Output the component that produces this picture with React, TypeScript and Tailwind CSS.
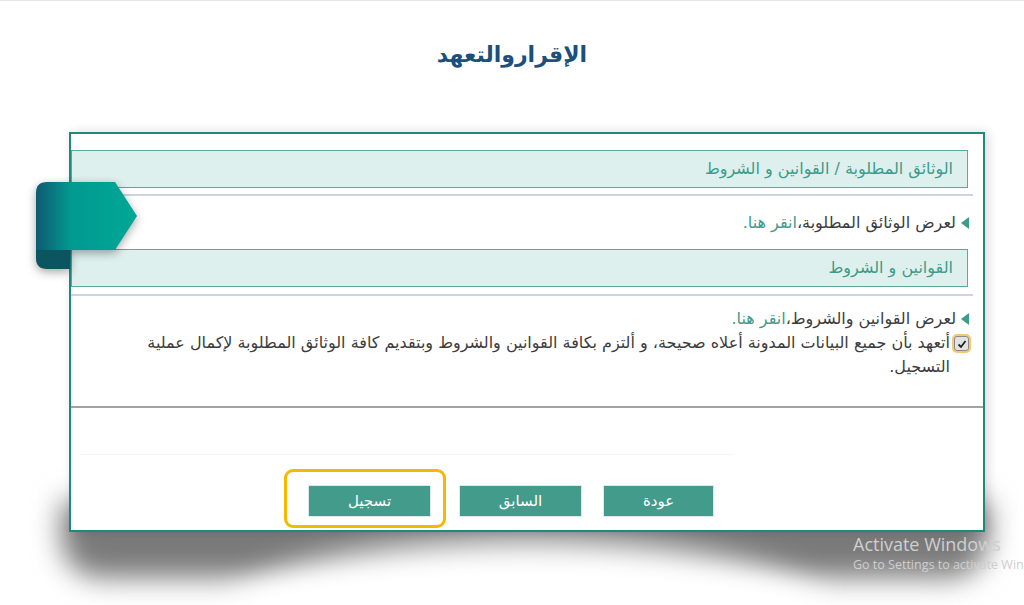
import React from "react";

const font = { fontFamily: '"DejaVu Sans", "Noto Sans", sans-serif' };

const Ribbon: React.FC = () => (
  <svg
    className="absolute left-[36px] top-[180px] drop-shadow-[0_3px_5px_rgba(0,0,0,0.35)]"
    width="104"
    height="90"
    viewBox="0 0 104 90"
  >
    <defs>
      <linearGradient id="rib" x1="0" y1="0" x2="1" y2="0">
        <stop offset="0" stopColor="#0f5a72" />
        <stop offset="0.35" stopColor="#019a90" />
        <stop offset="1" stopColor="#00a797" />
      </linearGradient>
    </defs>
    <path d="M0,69 H34 V88 H11 Q0,88 0,77 Z" fill="#0b5560" />
    <path d="M11,1 H79 L101,35 L79,69 H0 V12 Q0,1 11,1 Z" fill="url(#rib)" />
  </svg>
);

const Arrow: React.FC = () => (
  <span className="inline-block w-0 h-0 border-y-[6px] border-y-transparent border-r-[8px] border-r-[#3d9b8a] ml-[5px]" />
);

const SectionHeader: React.FC<{ title: string }> = ({ title }) => (
  <div className="mr-[15px] h-[38px] flex items-center bg-[#ddf0ee] border-[1.5px] border-[#5aa99b] pr-[14px] text-[16px] text-[#3d9b8a]">
    {title}
  </div>
);

const Button: React.FC<{ label: string; w: string; highlight?: boolean }> = ({
  label,
  w,
  highlight,
}) => (
  <button
    className={`relative h-[32px] ${w} bg-[#439b8c] text-white text-[15px] border border-[#d9ebe8]`}
  >
    {highlight && (
      <span className="absolute -left-[25px] -right-[16px] -top-[17px] -bottom-[12px] border-[3px] border-[#f6b800] rounded-[9px]" />
    )}
    {label}
  </button>
);

export default function App() {
  return (
    <div
      className="relative w-full h-[605px] bg-white border-t border-[#e6e6e6] overflow-hidden"
      style={font}
    >
      <h1
        dir="rtl"
        className="pt-[38px] h-[131px] text-center text-[22px] leading-[32px] font-bold text-[#1b4f7c]"
      >
        الإقراروالتعهد
      </h1>

      <div className="relative ml-[69px] w-[916px]">
        {/* curved lifted shadow */}
        <div className="absolute -left-[8px] -right-[4px] top-[370px] h-[76px] bg-[#7a7a7a] blur-[14px] rounded-b-[40px]" />
        <div className="absolute left-[160px] right-[160px] top-[408px] h-[150px] bg-white blur-[16px] rounded-[50%]" />

        <div
          dir="rtl"
          className="relative h-[400px] bg-white border-2 border-[#1f8a7c] pt-[16px] shadow-[3px_0_10px_rgba(0,0,0,0.15)]"
        >
          <SectionHeader title="الوثائق المطلوبة / القوانين و الشروط" />
          <div className="mr-[10px] mt-[6px] border-t-2 border-[#cdd5e3]" />
          <div className="h-[53px] flex items-center pr-[14px] text-[16px] text-[#3c3c3c]">
            <Arrow />
            <span>
              لعرض الوثائق المطلوبة،
              <span className="text-[#3d9b8a]">انقر هنا.</span>
            </span>
          </div>
          <SectionHeader title="القوانين و الشروط" />
          <div className="mr-[10px] mt-[7px] border-t-2 border-[#cdd5e3]" />
          <div className="h-[110px] pt-[11px] pr-[14px] pl-[38px] text-[16px] leading-[24px] text-[#3c3c3c]">
            <div className="flex items-center">
              <Arrow />
              <span>
                لعرض القوانين والشروط،
                <span className="text-[#3d9b8a]">انقر هنا.</span>
              </span>
            </div>
            <div className="flex items-start">
              <span className="mt-[5px] ml-[4px] shrink-0 w-[15px] h-[15px] rounded-[3px] bg-[#e3e3e3] border border-[#8a8a8a] shadow-[0_0_0_2px_#f6c873] flex items-center justify-center">
                <svg width="10" height="10" viewBox="0 0 10 10">
                  <path d="M1.5,5.5 L4,8 L8.5,2" fill="none" stroke="#222" strokeWidth="1.8" />
                </svg>
              </span>
              <p>
                أتعهد بأن جميع البيانات المدونة أعلاه صحيحة، و ألتزم بكافة القوانين والشروط وبتقديم كافة الوثائق المطلوبة لإكمال عملية التسجيل.
              </p>
            </div>
          </div>
          <div className="border-t-2 border-[#a3a3a3]" />
          <div className="mt-[46px] border-t border-[#f5f5f5] ml-[10px] mr-[250px]" />
          <div className="mt-[30px] flex gap-[21px] pr-[269px]">
            <Button label="عودة" w="w-[111px]" />
            <div className="flex gap-[28px]">
              <Button label="السابق" w="w-[123px]" />
              <Button label="تسجيل" w="w-[123px]" highlight />
            </div>
          </div>
        </div>
      </div>

      <Ribbon />

      <div
        className="absolute left-[853px] top-[531px] text-[#cfcfcf] whitespace-nowrap pointer-events-none"
        style={{ fontFamily: '"Open Sans", "Noto Sans", sans-serif' }}
      >
        <div className="text-[18px] leading-[24px]">Activate Windows</div>
        <div className="text-[12.5px] leading-[18px]">Go to Settings to activate Windows.</div>
      </div>
    </div>
  );
}
